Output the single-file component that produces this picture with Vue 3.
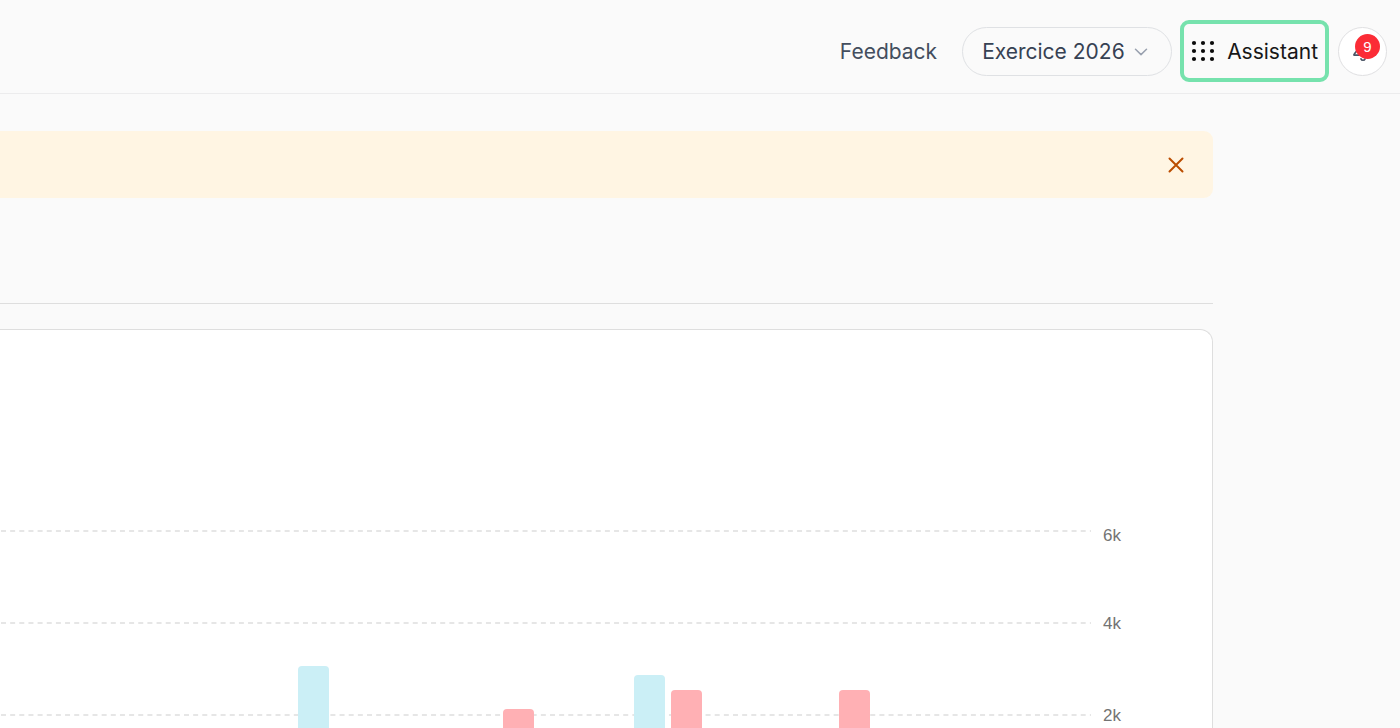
<script setup>
import { ref } from 'vue'

const exercise = ref('2026')
const bannerOpen = ref(true)

const ticks = [
  { label: '6k', line: 31, text: 41 },
  { label: '4k', line: 123, text: 129 },
  { label: '2k', line: 215, text: 221 },
]

const bars = [
  { x: 298, top: 166, kind: 'income' },
  { x: 503, top: 209, kind: 'expense' },
  { x: 634, top: 175, kind: 'income' },
  { x: 671, top: 190, kind: 'expense' },
  { x: 839, top: 190, kind: 'expense' },
]

const dots = [3, 12, 21]
</script>

<template>
  <div class="page">
    <header class="topbar">
      <a href="#" class="feedback">Feedback</a>
      <div class="picker">
        <select v-model="exercise" class="picker-select" aria-label="Exercice">
          <option value="2026">Exercice 2026</option>
        </select>
        <svg class="picker-arrow" width="14" height="10" viewBox="0 0 14 10" aria-hidden="true">
          <path d="M1.5 2.2 L7 7.6 L12.5 2.2" fill="none" stroke="#99a1af" stroke-width="1.5" stroke-linecap="round" stroke-linejoin="round" />
        </svg>
      </div>
      <button type="button" class="assistant">
        <svg width="24" height="24" viewBox="0 0 24 24" aria-hidden="true">
          <template v-for="y in dots" :key="y">
            <circle v-for="x in dots" :key="x" :cx="x" :cy="y - (y - 12) / 9" r="2.1" fill="#0a0a0a" />
          </template>
        </svg>
        <span>Assistant</span>
      </button>
      <button type="button" class="bell" aria-label="Notifications">
        <svg width="20" height="22" viewBox="0 0 20 22" fill="none" stroke="#4a5565" stroke-width="1.7" stroke-linecap="round" stroke-linejoin="round" aria-hidden="true">
          <path d="M10 2 C6.5 2 4.6 5 4.6 8.4 C4.6 10.8 2.6 12 1 14.6 Q0.8 15.2 1.4 15.2 H18.6 Q19.2 15.2 19 14.6 C17.4 12 15.4 10.8 15.4 8.4 C15.4 5 13.5 2 10 2 Z" />
          <path d="M8 18.9 C8.6 20.7 11.4 20.7 12 18.9" />
        </svg>
        <span class="badge">9</span>
      </button>
    </header>

    <main class="content">
      <div class="banner" :class="{ closed: !bannerOpen }" role="status">
        <button type="button" class="close" aria-label="Fermer" @click="bannerOpen = false">
          <svg width="16" height="16" viewBox="0 0 16 16" aria-hidden="true">
            <path d="M1.5 1.5 L14.5 14.5 M14.5 1.5 L1.5 14.5" stroke="#bb4d00" stroke-width="2" stroke-linecap="round" />
          </svg>
        </button>
      </div>
      <hr class="rule" />
      <section class="card">
        <svg class="chart" role="img" aria-label="2k, 4k, 6k">
          <g v-for="t in ticks" :key="t.label">
            <line x1="1" x2="1091" :y1="t.line" :y2="t.line" class="grid" />
            <text x="1103" :y="t.text" class="tick">{{ t.label }}</text>
          </g>
          <rect v-for="b in bars" :key="b.x" :x="b.x" :y="b.top" width="31" height="400" rx="4" :class="b.kind" />
        </svg>
      </section>
    </main>
  </div>
</template>

<style>
body {
  background: #fafafa;
}
</style>

<style scoped>
.page {
  box-sizing: border-box;
  display: flex;
  flex-direction: column;
  height: 100vh;
  overflow: hidden;
  background: #fafafa;
  font-family: Inter, "Liberation Sans", sans-serif;
}
.topbar {
  display: flex;
  align-items: center;
  justify-content: flex-end;
  box-sizing: border-box;
  padding: 20px 13px 11px;
  border-bottom: 1px solid #ececed;
}
.feedback {
  margin-right: 25px;
  padding-top: 2px;
  color: #434e5e;
  font-size: 21px;
  line-height: 30px;
  text-decoration: none;
}
.picker {
  position: relative;
  display: flex;
  margin-right: 8px;
}
.picker-select {
  appearance: none;
  box-sizing: border-box;
  width: 210px;
  height: 49px;
  padding: 0 44px 0 19px;
  border: 1px solid #dfe1e4;
  border-radius: 25px;
  background: #fafafa;
  color: #364153;
  font-family: inherit;
  font-size: 21px;
}
.picker-arrow {
  position: absolute;
  right: 24px;
  top: 20px;
  pointer-events: none;
}
.assistant {
  display: flex;
  align-items: center;
  gap: 12px;
  box-sizing: border-box;
  height: 62px;
  margin-right: 9px;
  padding: 0 7px;
  border: 4px solid #76e2ad;
  border-radius: 9px;
  background: #fafafa;
  color: #171717;
  font-family: inherit;
  font-size: 21px;
}
.bell {
  position: relative;
  display: flex;
  align-items: center;
  justify-content: center;
  box-sizing: border-box;
  width: 49px;
  height: 49px;
  padding: 0;
  border: 1px solid #e0e0e2;
  border-radius: 50%;
  background: #fff;
}
.badge {
  position: absolute;
  top: 6px;
  right: 6px;
  width: 25px;
  height: 25px;
  border-radius: 50%;
  background: #fb2c36;
  color: #fff;
  font-family: "Liberation Sans", Arial, sans-serif;
  font-size: 15px;
  line-height: 25px;
  text-align: center;
}
.content {
  display: flex;
  flex: 1;
  flex-direction: column;
  min-height: 0;
  margin-right: 187px;
  padding-top: 37px;
}
.banner {
  display: flex;
  align-items: center;
  justify-content: flex-end;
  box-sizing: border-box;
  height: 67px;
  padding-right: 29px;
  border-radius: 0 9px 9px 0;
  background: #fff5e3;
}
.banner.closed {
  visibility: hidden;
}
.close {
  display: flex;
  padding: 0;
  border: 0;
  background: none;
}
.rule {
  width: 100%;
  height: 1px;
  margin: 105px 0 25px;
  border: 0;
  background: #dedede;
}
.card {
  display: flex;
  flex: 1;
  box-sizing: border-box;
  min-height: 0;
  padding-top: 170px;
  border: solid #dedede;
  border-width: 1px 1px 0 0;
  border-radius: 0 13px 0 0;
  background: #fff;
}
.chart {
  width: 100%;
  height: 100%;
  overflow: hidden;
}
.grid {
  stroke: #dedede;
  stroke-width: 1.4;
  stroke-dasharray: 5 4.15;
}
.tick {
  fill: #737373;
  font-family: "Liberation Sans", Arial, sans-serif;
  font-size: 17px;
}
.income {
  fill: #cbeff6;
}
.expense {
  fill: #ffb0b4;
}
</style>
